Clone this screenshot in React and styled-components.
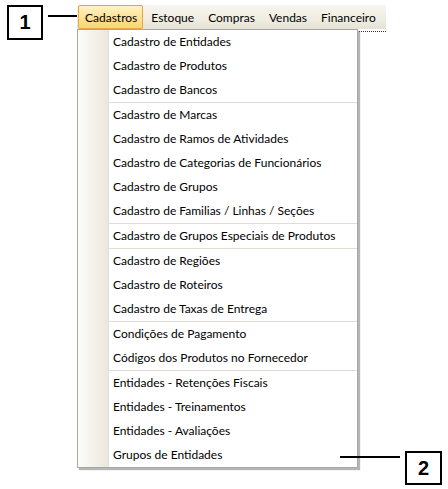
import React from "react";
import styled, { createGlobalStyle } from "styled-components";

const Global = createGlobalStyle`
  html, body { margin: 0; padding: 0; background: #ffffff; }
  body { font-family: "Lato", "Open Sans", sans-serif; }
`;

const Page = styled.div`
  position: relative;
  width: 448px;
  height: 489px;
  box-sizing: border-box;
  padding: 5px 0 0 7px;
  overflow: hidden;
  background: #fff;
  display: flex;
  align-items: flex-start;
`;

const Note = styled.div`
  display: flex;
  align-items: flex-start;
`;

const RightNote = styled(Note)`
  position: absolute;
  left: 340px;
  top: 451px;
`;

const CalloutBox = styled.div`
  width: ${(p) => p.$w}px;
  height: ${(p) => p.$h}px;
  box-sizing: border-box;
  border: 2px solid #000;
  background: #fff;
  display: flex;
  align-items: center;
  justify-content: center;
  font-family: "Liberation Sans", Arial, sans-serif;
  font-weight: bold;
  font-size: 20px;
  color: #000;
  flex-shrink: 0;
`;

const Leader = styled.div`
  width: ${(p) => p.$w}px;
  height: 2px;
  margin: ${(p) => p.$m};
  background: #000;
  flex-shrink: 0;
`;

const MenuArea = styled.div`
  display: flex;
  flex-direction: column;
  align-items: flex-start;
`;

const MenuBar = styled.div`
  position: relative;
  display: flex;
  align-items: stretch;
  width: 309px;
  height: 24px;
  background: linear-gradient(to bottom, #f7f5ee 0%, #efece2 60%, #e6e2d5 100%);
`;

const BarItem = styled.div`
  display: flex;
  align-items: center;
  padding: ${(p) => (p.$active ? "0 5px 0 6px" : "0 6px")};
  margin: ${(p) => (p.$active ? "0 1px" : "0")};
  font-size: 12px;
  color: #000;
  box-sizing: border-box;
  border: 1px solid ${(p) => (p.$active ? "#e8a640" : "transparent")};
  border-radius: 2px;
  background: ${(p) =>
    p.$active
      ? "linear-gradient(to bottom, #fff3c9 0%, #fde49a 45%, #fbd673 100%)"
      : "transparent"};
`;

const Dotted = styled.div`
  position: absolute;
  right: 0;
  bottom: -3px;
  width: 27px;
  border-top: 1px dotted #333;
`;

const Dropdown = styled.div`
  width: 281px;
  box-sizing: border-box;
  border: 1px solid #a8a7a4;
  background: #fff;
  box-shadow: 2px 2px 1px rgba(90, 90, 90, 0.45);
  position: relative;
  display: flex;
  flex-direction: column;
`;

const Gutter = styled.div`
  position: absolute;
  left: 0;
  top: 0;
  bottom: 0;
  width: 30px;
  background: linear-gradient(to right, #fdfcf9 0%, #f3f0e8 60%, #ebe7dc 100%);
  border-right: 1px solid #e4e0d5;
`;

const Item = styled.div`
  position: relative;
  height: 24px;
  line-height: 24px;
  padding-left: 35px;
  font-size: 12px;
  color: #000;
  white-space: nowrap;
`;

const Separator = styled.div`
  position: relative;
  height: 1px;
  margin-left: 31px;
  background: #e2ddd0;
`;

const groups = [
  ["Cadastro de Entidades", "Cadastro de Produtos", "Cadastro de Bancos"],
  [
    "Cadastro de Marcas",
    "Cadastro de Ramos de Atividades",
    "Cadastro de Categorias de Funcionários",
    "Cadastro de Grupos",
    "Cadastro de Familias / Linhas / Seções",
  ],
  ["Cadastro de Grupos Especiais de Produtos"],
  ["Cadastro de Regiões", "Cadastro de Roteiros", "Cadastro de Taxas de Entrega"],
  ["Condições de Pagamento", "Códigos dos Produtos no Fornecedor"],
  [
    "Entidades - Retenções Fiscais",
    "Entidades - Treinamentos",
    "Entidades - Avaliações",
    "Grupos de Entidades",
  ],
];

const barItems = ["Cadastros", "Estoque", "Compras", "Vendas", "Financeiro"];

export default function App() {
  return (
    <Page>
      <Global />
      <Note>
        <CalloutBox $w={36} $h={35}>1</CalloutBox>
        <Leader $w={29} $m="10px 0 0 5px" />
      </Note>
      <MenuArea>
        <MenuBar>
          {barItems.map((t, i) => (
            <BarItem key={t} $active={i === 0}>
              {t}
            </BarItem>
          ))}
          <Dotted />
        </MenuBar>
        <Dropdown>
          <Gutter />
          {groups.map((g, gi) => (
            <React.Fragment key={gi}>
              {gi > 0 && <Separator />}
              {g.map((t) => (
                <Item key={t}>{t}</Item>
              ))}
            </React.Fragment>
          ))}
        </Dropdown>
      </MenuArea>
      <RightNote>
        <Leader $w={60} $m="5px 5px 0 0" />
        <CalloutBox $w={37} $h={34}>2</CalloutBox>
      </RightNote>
    </Page>
  );
}
